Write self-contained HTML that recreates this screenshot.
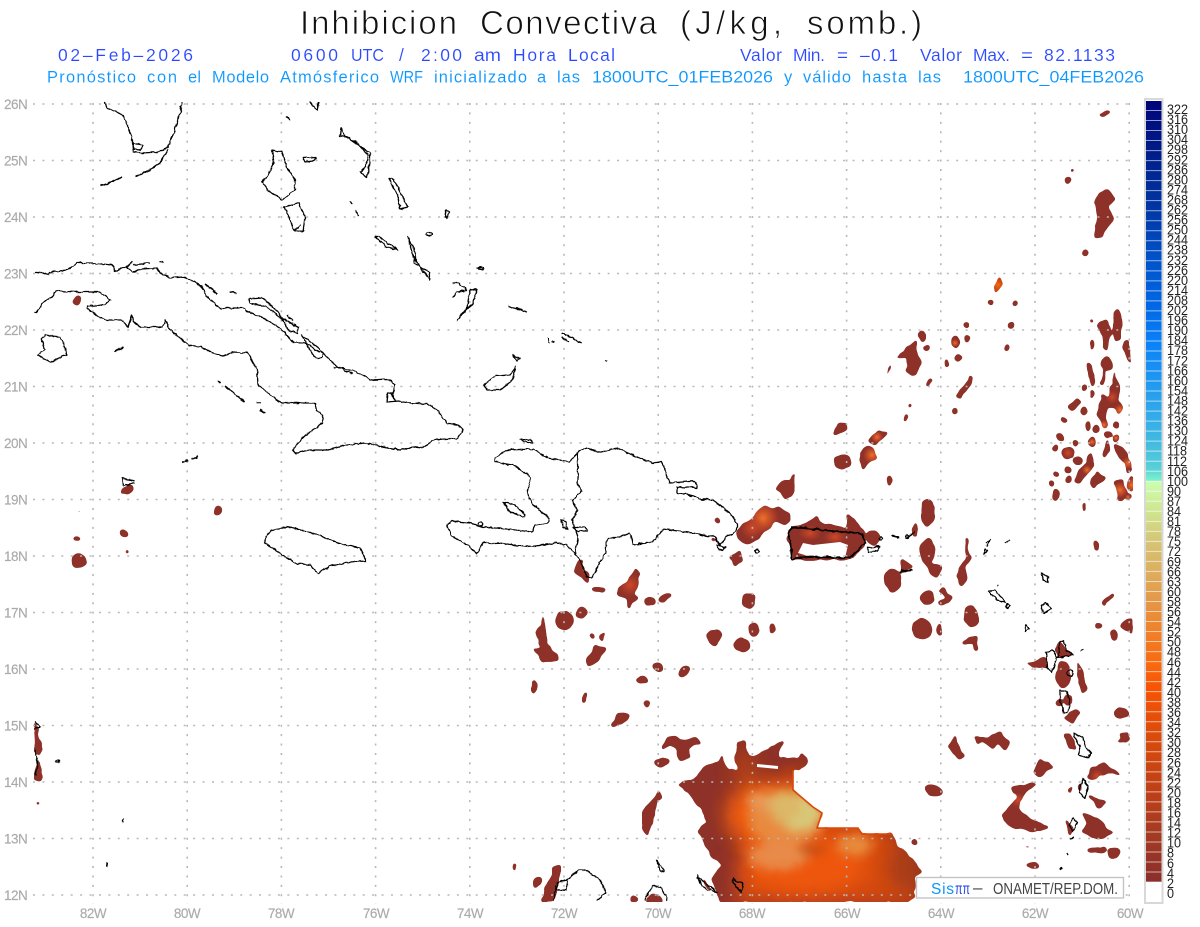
<!DOCTYPE html>
<html><head><meta charset="utf-8"><title>Inhibicion Convectiva</title>
<style>
html,body{margin:0;padding:0;background:#fff}
svg{display:block}
.t{font-family:"Liberation Sans",sans-serif}
.ti text{font-family:"Liberation Sans",sans-serif;font-size:33px;fill:#111;stroke:#fff;stroke-width:.75px}
.l2 text{font-family:"Liberation Sans",sans-serif;font-size:17.5px;fill:#2a48ff;stroke:#fff;stroke-width:.12px}
.l3 text{font-family:"Liberation Sans",sans-serif;font-size:16.5px;fill:#0a96ff;stroke:#fff;stroke-width:.1px}
.g text{font-family:"Liberation Sans",sans-serif;font-size:13.5px;fill:#aaa;stroke:#aaa;stroke-width:.15px;letter-spacing:-.5px}
.c text{font-family:"Liberation Sans",sans-serif;font-size:14px;fill:#222}
.coast{fill:none;stroke:#000;stroke-width:1.3;stroke-linejoin:round}
.r{fill:#8e3128;stroke:none}
</style></head><body>
<svg xmlns="http://www.w3.org/2000/svg" width="1200" height="927" viewBox="0 0 1200 927">
<defs>
<clipPath id="plot"><rect x="34" y="101" width="1099" height="801"/></clipPath>
<clipPath id="mainclip"><path d="M720 902L712 878L722 864L712 857L698 830L707 823L700 807L683 788L677 785L683 781L695 780L703 767L718 762L722 755L728 770L737 770L735 758L738 742L745 742L750 757L753 757L767 750L782 740L783 743L778 757L798 758L802 753L808 762L800 770L793 770L793 790L813 807L822 813L817 828L858 828L862 834L892 834L898 847L913 860L922 872L915 877L915 897L907 902Z"/></clipPath>
<filter id="b10" x="-30%" y="-30%" width="160%" height="160%"><feGaussianBlur stdDeviation="9"/></filter>
<filter id="b5" x="-30%" y="-30%" width="160%" height="160%"><feGaussianBlur stdDeviation="5"/></filter>
<filter id="goo" filterUnits="userSpaceOnUse" x="0" y="90" width="1200" height="830" color-interpolation-filters="sRGB">
<feTurbulence type="fractalNoise" baseFrequency=".11" numOctaves="2" seed="4" result="n"/>
<feDisplacementMap in="SourceGraphic" in2="n" scale="5" xChannelSelector="R" yChannelSelector="G" result="d"/>
<feGaussianBlur in="d" stdDeviation="1.2"/>
<feColorMatrix type="matrix" values="1 0 0 0 0 0 1 0 0 0 0 0 1 0 0 0 0 0 9 -3"/>
</filter>
<filter id="wig" filterUnits="userSpaceOnUse" x="0" y="90" width="1200" height="830" color-interpolation-filters="sRGB">
<feTurbulence type="fractalNoise" baseFrequency=".2" numOctaves="2" seed="9" result="n"/>
<feDisplacementMap in="SourceGraphic" in2="n" scale="3.2" xChannelSelector="R" yChannelSelector="G" result="d"/>
<feGaussianBlur in="d" stdDeviation=".3"/>
</filter>
<radialGradient id="hot"><stop offset="0" stop-color="#f07010"/><stop offset="1" stop-color="#f05a0a" stop-opacity="0"/></radialGradient>
<radialGradient id="mid"><stop offset="0" stop-color="#d0480f"/><stop offset="1" stop-color="#c0441a" stop-opacity="0"/></radialGradient>
<linearGradient id="bar" gradientUnits="userSpaceOnUse" x1="0" y1="101" x2="0" y2="882">
<stop offset="0" stop-color="#00047a"/><stop offset=".06" stop-color="#001b88"/><stop offset=".13" stop-color="#0033a0"/>
<stop offset=".2" stop-color="#0051c8"/><stop offset=".26" stop-color="#0066e4"/><stop offset=".31" stop-color="#0a82f8"/>
<stop offset=".36" stop-color="#2098f0"/><stop offset=".41" stop-color="#36aee8"/><stop offset=".44" stop-color="#44bce0"/>
<stop offset=".47" stop-color="#58d0d8"/><stop offset=".4865" stop-color="#7cf4cc"/><stop offset=".4866" stop-color="#ccffb0"/>
<stop offset=".53" stop-color="#d0e28c"/><stop offset=".56" stop-color="#d4c878"/><stop offset=".6" stop-color="#dcb060"/>
<stop offset=".64" stop-color="#e49848"/><stop offset=".67" stop-color="#ee8630"/><stop offset=".72" stop-color="#fa6a10"/>
<stop offset=".75" stop-color="#f85404"/><stop offset=".82" stop-color="#d84a0c"/><stop offset=".88" stop-color="#c04016"/>
<stop offset=".94" stop-color="#a43a22"/><stop offset="1" stop-color="#8a2e2c"/>
</linearGradient>
</defs>
<rect width="1200" height="927" fill="#fff"/>

<g class="ti">
<text x="300" y="34" textLength="157" lengthAdjust="spacing">Inhibicion</text>
<text x="480" y="34" textLength="177" lengthAdjust="spacing">Convectiva</text>
<text x="680" y="34" textLength="102" lengthAdjust="spacing">(J/kg,</text>
<text x="807" y="34" textLength="115" lengthAdjust="spacing">somb.)</text>
</g>
<g class="l2">
<text x="58" y="61" textLength="135" lengthAdjust="spacing">02–Feb–2026</text>
<text x="291" y="61" textLength="47" lengthAdjust="spacing">0600</text>
<text x="351" y="61" textLength="33" lengthAdjust="spacingAndGlyphs">UTC</text>
<text x="399" y="61">/</text>
<text x="421" y="61" textLength="41" lengthAdjust="spacing">2:00</text>
<text x="474" y="61" textLength="27" lengthAdjust="spacingAndGlyphs">am</text>
<text x="513" y="61" textLength="43" lengthAdjust="spacing">Hora</text>
<text x="568" y="61" textLength="47" lengthAdjust="spacing">Local</text>
<text x="740" y="61" textLength="42" lengthAdjust="spacing">Valor</text>
<text x="793" y="61" textLength="32" lengthAdjust="spacing">Min.</text>
<text x="837" y="61" textLength="11" lengthAdjust="spacingAndGlyphs">=</text>
<text x="860" y="61" textLength="38" lengthAdjust="spacing">–0.1</text>
<text x="920" y="61" textLength="42" lengthAdjust="spacing">Valor</text>
<text x="973" y="61" textLength="37" lengthAdjust="spacing">Max.</text>
<text x="1021" y="61" textLength="12" lengthAdjust="spacingAndGlyphs">=</text>
<text x="1044" y="61" textLength="71" lengthAdjust="spacing">82.1133</text>
</g>
<g class="l3">
<text x="47" y="82.5" textLength="89" lengthAdjust="spacing">Pronóstico</text>
<text x="147" y="82.5" textLength="30" lengthAdjust="spacing">con</text>
<text x="188" y="82.5" textLength="13" lengthAdjust="spacing">el</text>
<text x="212" y="82.5" textLength="57" lengthAdjust="spacing">Modelo</text>
<text x="280" y="82.5" textLength="99" lengthAdjust="spacing">Atmósferico</text>
<text x="390" y="82.5" textLength="33" lengthAdjust="spacingAndGlyphs">WRF</text>
<text x="434" y="82.5" textLength="93" lengthAdjust="spacing">inicializado</text>
<text x="537" y="82.5" textLength="10" lengthAdjust="spacing">a</text>
<text x="557" y="82.5" textLength="23" lengthAdjust="spacing">las</text>
<text x="592" y="82.5" textLength="181" lengthAdjust="spacingAndGlyphs">1800UTC_01FEB2026</text>
<text x="784" y="82.5" textLength="8" lengthAdjust="spacing">y</text>
<text x="803" y="82.5" textLength="48" lengthAdjust="spacing">válido</text>
<text x="862" y="82.5" textLength="45" lengthAdjust="spacing">hasta</text>
<text x="918" y="82.5" textLength="23" lengthAdjust="spacing">las</text>
<text x="963" y="82.5" textLength="181" lengthAdjust="spacingAndGlyphs">1800UTC_04FEB2026</text>
</g>

<line x1="34" y1="101.5" x2="1133" y2="101.5" stroke="#f2f2f2"/>

<g clip-path="url(#plot)">
<rect x="34" y="101" width="1099" height="801" fill="#fff"/>
<!-- main blob -->
<g filter="url(#goo)">
<g clip-path="url(#mainclip)">
<rect x="670" y="730" width="260" height="175" fill="#8e3128"/>
<g filter="url(#b10)">
<path d="M745 790L800 770L895 835L925 905L735 905Z" fill="#d44a0e"/>
<ellipse cx="805" cy="865" rx="62" ry="30" fill="#ee560a"/>
<ellipse cx="765" cy="815" rx="40" ry="34" fill="#ee5c10"/>
<ellipse cx="745" cy="770" rx="12" ry="20" fill="#b04018"/>
<ellipse cx="725" cy="885" rx="14" ry="20" fill="#8e3128"/>
<ellipse cx="905" cy="868" rx="18" ry="26" fill="#a83c14"/>
</g>
<g filter="url(#b5)">
<ellipse cx="786" cy="818" rx="38" ry="28" fill="#e88a40"/>
<ellipse cx="778" cy="856" rx="30" ry="14" fill="#e88a48"/>
<ellipse cx="855" cy="845" rx="18" ry="11" fill="#e88a3a"/>
<ellipse cx="762" cy="800" rx="16" ry="8" fill="#e89a58"/>
<ellipse cx="812" cy="850" rx="13" ry="4" fill="#b84a18"/>
<ellipse cx="800" cy="812" rx="22" ry="19" fill="#d8c878"/>
<ellipse cx="785" cy="806" rx="16" ry="16" fill="#dcb868"/>
</g>
</g>
</g>
<path d="M793 770L793 790L813 807L822 813L817 828L858 828L862 834L892 834" fill="none" stroke="#d8480a" stroke-width="1.6"/>
<path d="M757 764L778 766L778 769L757 767Z" fill="#fff"/>

<!-- blobs -->
<g class="r" filter="url(#goo)">
<ellipse cx="1105" cy="113" rx="5" ry="2" transform="rotate(-15 1105 113)"/><ellipse cx="1072" cy="170" rx="2" ry="2"/><ellipse cx="1068" cy="181" rx="2.5" ry="4"/>
<ellipse cx="1085" cy="253" rx="3" ry="3.5"/><circle cx="1080" cy="156" r="1"/>
<path d="M1108 189L1115 200L1108 207L1113 217L1106 230L1102 238L1095 237L1096 220L1098 213L1094 203L1098 193Z"/>
<path style="fill:#c8440f" d="M1000 277L1003 283L996 293L993 287Z"/>
<circle cx="991" cy="303" r="2.8"/><circle cx="1015" cy="303" r="2.8"/><circle cx="967" cy="325" r="3"/><circle cx="1011" cy="325" r="3.6"/>
<ellipse cx="955" cy="342" rx="4" ry="6"/><circle cx="967" cy="339" r="3"/><circle cx="1007" cy="347" r="2.8"/><circle cx="959" cy="357" r="3.2"/><circle cx="927" cy="348" r="2.6"/><ellipse cx="922" cy="336" rx="4" ry="5"/>
<path d="M915 339L918 358L922 363L915 375L905 372L908 367L905 358L895 356L903 353Z"/>
<path d="M890 362L891 370L885 375L889 368Z"/>
<ellipse cx="947" cy="363" rx="2" ry="4.5"/>
<path d="M926 385L932 379" stroke="#8e3128" stroke-width="3"/>
<path d="M971 377L966 386L958 398" stroke="#8e3128" stroke-width="5" fill="none"/>
<circle cx="910" cy="406" r="2.2"/><ellipse cx="906" cy="418" rx="1.8" ry="4"/><circle cx="955" cy="411" r="3"/><ellipse cx="890" cy="481" rx="1.5" ry="5"/>
<ellipse cx="928" cy="513" rx="7" ry="14"/>
<path d="M912 530L915 520L918 530L917 536L912 536Z"/>
<circle cx="1092" cy="321" r="1.8"/>
<path d="M1097 325L1105 318L1112 332L1108 342L1107 351L1102 348L1103 337Z"/>
<path d="M1117 308L1122 315L1120 340L1116 343L1113 333L1114 313Z"/>
<path d="M1122 345L1128 340L1132 370L1128 360Z"/>
<ellipse cx="1092" cy="345" rx="1.5" ry="7"/>
<path d="M1088 361L1093 367L1096 383L1092 386L1087 373Z"/>
<circle cx="1107" cy="364" r="6"/><path d="M1105 368L1104 385L1100 385L1103 372Z"/>
<path d="M1113 370L1120 388L1118 400L1123 407L1120 415L1113 407L1107 407L1107 415L1105 420L1107 427L1103 428L1097 413L1102 395L1108 398L1112 385Z"/>
<circle cx="1084" cy="388" r="3"/><ellipse cx="1092" cy="394" rx="2" ry="5"/>
<path d="M1070 409L1079 400" stroke="#8e3128" stroke-width="6" fill="none"/>
<circle cx="1084" cy="411" r="3.5"/><circle cx="1064" cy="420" r="3"/><ellipse cx="1088" cy="426" rx="2.5" ry="5"/><circle cx="1096" cy="429" r="3.5"/><circle cx="1116" cy="425" r="3"/><circle cx="1108" cy="434" r="3.5"/><circle cx="1060" cy="438" r="3.8"/><circle cx="1056" cy="448" r="3"/><circle cx="1076" cy="443" r="3"/><ellipse cx="1092" cy="442" rx="3.5" ry="5"/><circle cx="1116" cy="438" r="3.5"/>
<path d="M1108 438L1110 450L1104 458L1102 455Z"/>
<ellipse cx="1068" cy="453" rx="6" ry="6"/><ellipse cx="1078" cy="461" rx="5" ry="4"/>
<path d="M1097 450L1092 453L1093 467L1087 473L1080 483L1075 482L1080 470L1088 463L1087 455Z"/>
<circle cx="1068" cy="470" r="3.5"/><circle cx="1056" cy="474" r="3"/><circle cx="1068" cy="479" r="3"/><circle cx="1052" cy="484" r="3"/><ellipse cx="1056" cy="495" rx="4" ry="6"/>
<path d="M1097 472L1107 478L1100 483L1093 487L1090 483L1093 477Z"/>
<path d="M1115 443L1127 453L1130 460L1132 470L1127 473L1125 462L1115 452Z"/>
<path d="M1115 480L1123 480L1127 492L1122 502L1117 500L1117 487L1113 483Z"/>
<circle cx="1128" cy="497" r="3"/><ellipse cx="1131" cy="483" rx="3" ry="8"/><ellipse cx="1084" cy="507" rx="1.5" ry="5"/>
<path d="M765 504L772 509L778 507L790 513L790 520L783 524L775 522L768 530L747 545L737 538L737 530L753 517Z"/>
<path d="M795 473L795 490L787 501L775 488L780 482L790 480Z"/>
<path d="M787 537L792 527L807 523L817 515L820 523L847 528L847 515L853 518L865 533L865 545L852 558L837 560L792 560L790 543Z"/>
<ellipse cx="873" cy="538" rx="7" ry="7"/>
<ellipse cx="893" cy="580" rx="8" ry="12"/><path d="M902 558L913 567L900 573Z"/>
<circle cx="842" cy="462" r="8"/>
<path d="M867 445L873 448L878 458L868 463L863 472L860 453Z"/>
<path d="M878 430L887 434L875 446L868 440Z"/>
<path d="M832 435L838 424L848 423L847 430L838 435Z"/>
<ellipse cx="717" cy="520" rx="2.5" ry="2.5"/><circle cx="713" cy="539" r="2"/>
<path d="M730 557L740 550L743 562L735 567Z"/>
<path d="M577 560L582 560L583 570L590 575L588 583L575 572Z"/>
<ellipse cx="599" cy="589" rx="7" ry="3"/>
<path d="M635 567L640 573L635 593L638 598L628 610L627 598L618 595L618 588L627 583Z"/>
<ellipse cx="650" cy="602" rx="6" ry="5"/><ellipse cx="665" cy="597" rx="7" ry="3.5" transform="rotate(-35 665 597)"/>
<ellipse cx="565" cy="620" rx="8.5" ry="9"/><circle cx="581" cy="613" r="5.5"/>
<path d="M543 610L547 643L557 655L557 660L542 662L533 648L540 650L536 633L542 623Z"/>
<circle cx="748" cy="601" r="7"/><ellipse cx="714" cy="637" rx="7.5" ry="8.5"/><ellipse cx="742" cy="645" rx="8" ry="7"/><ellipse cx="754" cy="630" rx="5" ry="7"/><ellipse cx="772" cy="628" rx="3.5" ry="5"/>
<circle cx="592" cy="636" r="2"/>
<path d="M599 635L606 633L602 642Z"/>
<path d="M595 646L607 648L597 662L588 666L585 660L590 655Z"/>
<circle cx="658" cy="667" r="5"/><ellipse cx="684" cy="671" rx="7" ry="3.5" transform="rotate(-40 684 671)"/><ellipse cx="642" cy="680" rx="6" ry="4"/><ellipse cx="534" cy="687" rx="2.5" ry="7"/><ellipse cx="585" cy="697" rx="2.5" ry="6" transform="rotate(15 585 697)"/><circle cx="647" cy="704" r="3"/>
<rect x="566" y="714" width="1.2" height="5"/><rect x="566" y="597" width="1.2" height="6"/>
<path d="M618 713L630 715L628 720L613 728L612 725Z"/>
<path d="M668 737L675 736L682 741L697 736L702 743L688 748L690 758L680 760L675 748L670 745L663 750L663 745Z"/>
<ellipse cx="662" cy="762" rx="8" ry="4"/>
<path d="M660 790L663 797L657 802L653 820L648 836L642 828L643 810L655 797Z"/>
<ellipse cx="515" cy="867" rx="2" ry="4"/><ellipse cx="537" cy="882" rx="3" ry="6" transform="rotate(30 537 882)"/>
<path d="M553 867L561 865L559 880L553 902L542 902L545 888L552 877Z"/>
<ellipse cx="634" cy="899" rx="3.5" ry="4"/><ellipse cx="654" cy="900" rx="8" ry="6"/>
<path d="M702 878L709 888L717 892L708 890L703 884Z"/>
<ellipse cx="928" cy="551" rx="7" ry="13"/>
<path d="M925 563L943 565L938 578L930 575Z"/>
<path d="M966 538L968 538L968 554L973 558L966 565L966 580L962 587L957 577L960 567L966 557Z"/>
<circle cx="927" cy="598" r="7"/>
<path d="M937 592L943 587L953 597L950 603L938 606L937 602L947 598L942 593Z"/>
<ellipse cx="971" cy="616" rx="7" ry="11"/><ellipse cx="923" cy="629" rx="9.5" ry="10.5"/><ellipse cx="939" cy="629" rx="2.5" ry="6"/>
<path d="M961 645L968 637L977 637L978 650L975 652L973 643L967 643Z"/>
<path d="M958 659L961 657L962 660Z"/>
<ellipse cx="1096" cy="546" rx="2.5" ry="4.5"/>
<path d="M1103 605L1113 593" stroke="#8e3128" stroke-width="3.5" fill="none"/>
<path d="M1121 625L1132 617L1132 635Z"/>
<ellipse cx="1098" cy="626" rx="4" ry="2.5"/><ellipse cx="1114" cy="635" rx="3.5" ry="5"/>
<path d="M1053 650L1060 642L1073 655L1060 658Z"/>
<path d="M1025 663L1037 661L1046 657L1047 668L1035 667Z"/>
<ellipse cx="1063" cy="675" rx="7" ry="13"/>
<path d="M1077 660L1083 673L1087 690L1082 693L1078 677Z"/>
<ellipse cx="1060" cy="703" rx="3" ry="4"/><ellipse cx="1068" cy="700" rx="4" ry="6"/>
<path d="M1078 708L1080 713L1072 723L1063 718L1070 713L1073 710Z"/>
<ellipse cx="1121" cy="713" rx="7" ry="5.5"/>
<path d="M1063 733L1070 733L1077 750L1070 750Z"/>
<path d="M1119 732L1128 733L1127 742L1117 743L1122 738Z"/>
<path d="M955 735L958 743L965 757L958 759L948 747Z"/>
<path d="M973 737L988 737L1000 732L1010 743L1005 751L998 743L993 750L983 740L978 745Z"/>
<ellipse cx="934" cy="790" rx="9" ry="5.5" transform="rotate(18 934 790)"/>
<path d="M1040 758L1053 767L1038 777L1033 772Z"/>
<path d="M1103 763L1122 775L1107 773L1093 780L1087 777L1092 767Z"/>
<path d="M1010 787L1037 783L1023 795L1018 808L1037 823L1050 828L1033 831L1010 827L1002 815L1017 798Z"/>
<path d="M1088 795L1107 803L1098 809Z"/>
<path d="M1082 813L1097 818L1105 827L1113 833L1097 840L1083 833L1087 823Z"/>
<path d="M1065 818L1075 830L1070 836Z"/>
<path d="M1073 785L1070 795L1067 790Z"/>
<path d="M1078 785L1082 782L1081 792Z"/>
<ellipse cx="1097" cy="850" rx="9" ry="3"/><ellipse cx="1114" cy="853" rx="6" ry="5"/><ellipse cx="1033" cy="865" rx="7" ry="2.5"/><circle cx="915" cy="842" r="3"/><rect x="1024" y="846" width="6" height="1.5"/>
<path d="M1122 735L1127 733L1130 740L1126 744Z"/>
<ellipse cx="127" cy="490" rx="6.5" ry="2.8" transform="rotate(-35 127 490)"/><circle cx="79" cy="512" r="1.5"/><ellipse cx="218" cy="510" rx="4" ry="4.5"/><ellipse cx="124" cy="534" rx="5" ry="3"/><ellipse cx="77" cy="539" rx="3" ry="2"/><circle cx="127" cy="552" r="1.8"/><circle cx="79" cy="561" r="7"/><circle cx="38" cy="804" r="1.8"/>
<path d="M34 722L38 727L38 735L41 745L42 750L38 757L35 750Z"/>
<path d="M38 760L42 770L41 780L34 780L35 770Z"/>
<ellipse cx="77" cy="300" rx="3.5" ry="4.5" transform="rotate(15 77 300)"/><rect x="37" y="316" width="5" height="1.5"/>
</g>
<path d="M803 543L813 545L840 542L848 545L845 558L835 558L827 555L822 557L808 556L798 553Z" fill="#fff"/>
<!-- hot spots: lighten keeps white background untouched -->
<g style="mix-blend-mode:lighten">
<circle cx="763" cy="518" r="16" fill="url(#hot)"/>
<ellipse cx="752" cy="528" rx="12" ry="12" fill="url(#mid)"/>
<ellipse cx="810" cy="533" rx="12" ry="8" fill="url(#mid)"/><ellipse cx="835" cy="537" rx="12" ry="8" fill="url(#mid)"/>
<circle cx="872" cy="455" r="9" fill="url(#hot)"/><circle cx="877" cy="437" r="6" fill="url(#hot)"/>
<circle cx="630" cy="585" r="12" fill="url(#mid)"/>
<circle cx="955" cy="343" r="4" fill="url(#hot)"/><circle cx="1112" cy="397" r="7" fill="url(#mid)"/><circle cx="1120" cy="410" r="6" fill="url(#hot)"/><circle cx="1104" cy="425" r="5" fill="url(#hot)"/>
<circle cx="1092" cy="442" r="4" fill="url(#hot)"/><circle cx="1096" cy="451" r="4" fill="url(#hot)"/><circle cx="1116" cy="438" r="3.5" fill="url(#hot)"/><circle cx="1068" cy="453" r="6" fill="url(#mid)"/><circle cx="1087" cy="470" r="5" fill="url(#hot)"/><circle cx="1128" cy="463" r="6" fill="url(#hot)"/><circle cx="1120" cy="490" r="8" fill="url(#hot)"/><circle cx="1132" cy="485" r="8" fill="url(#hot)"/><circle cx="1128" cy="497" r="3" fill="url(#hot)"/>
<circle cx="998" cy="285" r="6" fill="url(#hot)"/><circle cx="1097" cy="776" r="7" fill="url(#mid)"/><circle cx="1018" cy="800" r="8" fill="url(#mid)"/>
</g>
</g>

<!-- grid -->
<g stroke="#b8b8b8" stroke-width="1.6" stroke-dasharray="2 7.42">
<line x1="33" y1="104" x2="1134" y2="104"/><line x1="33" y1="160.5" x2="1134" y2="160.5"/><line x1="33" y1="217" x2="1134" y2="217"/><line x1="33" y1="273.5" x2="1134" y2="273.5"/><line x1="33" y1="330" x2="1134" y2="330"/><line x1="33" y1="386.5" x2="1134" y2="386.5"/><line x1="33" y1="443" x2="1134" y2="443"/><line x1="33" y1="499.5" x2="1134" y2="499.5"/><line x1="33" y1="556" x2="1134" y2="556"/><line x1="33" y1="612.5" x2="1134" y2="612.5"/><line x1="33" y1="669" x2="1134" y2="669"/><line x1="33" y1="725.5" x2="1134" y2="725.5"/><line x1="33" y1="782" x2="1134" y2="782"/><line x1="33" y1="838.5" x2="1134" y2="838.5"/><line x1="33" y1="895" x2="1134" y2="895"/>
<line x1="93" y1="103" x2="93" y2="904"/><line x1="187.2" y1="103" x2="187.2" y2="904"/><line x1="281.4" y1="103" x2="281.4" y2="904"/><line x1="375.6" y1="103" x2="375.6" y2="904"/><line x1="469.8" y1="103" x2="469.8" y2="904"/><line x1="564" y1="103" x2="564" y2="904"/><line x1="658.2" y1="103" x2="658.2" y2="904"/><line x1="752.4" y1="103" x2="752.4" y2="904"/><line x1="846.6" y1="103" x2="846.6" y2="904"/><line x1="940.8" y1="103" x2="940.8" y2="904"/><line x1="1035" y1="103" x2="1035" y2="904"/><line x1="1129.2" y1="103" x2="1129.2" y2="904"/>
</g>

<!-- coasts -->
<g clip-path="url(#plot)"><g class="coast" filter="url(#wig)">
<path d="M35 273L43 273L48 275L50 272L67 270L78 263L92 263L112 265L115 271L125 267L132 262L127 267L133 272L142 269L157 268L160 273L170 278L183 277L197 283L203 288L207 297L220 308L233 308L245 308L248 312L263 318L280 328L288 337L293 342L307 343L315 350L323 353L333 363L338 367L353 371L363 375L370 380L388 379L395 385L393 393L388 393L387 402L398 401L410 403L427 404L437 410L447 423L458 425L463 430L458 438L433 440L422 448L413 447L400 450L380 446L365 443L347 445L328 450L310 450L295 453L293 450L303 437L322 423L323 415L317 410L315 403L297 403L282 403L273 397L258 385L257 370L248 353L233 352L223 356L213 353L200 347L190 346L170 330L165 320L163 327L140 327L133 322L132 315L128 327L122 320L107 320L98 317L87 308L87 306L105 305L110 300L100 292L77 292L57 291L50 298L42 303L37 312L34 312"/>
<path d="M45 335L60 337L65 347L66 355L50 362L37 355L45 350L42 340Z"/>
<path d="M264 542L270 531L287 527L310 532L345 545L360 548L366 561L350 562L330 566L318 573L310 565L295 563L280 553Z"/>
<path d="M495 458L507 450L533 449L548 458L570 462L577 453L585 448L602 452L617 448L635 456L652 463L662 462L670 483L695 481L697 488L677 487L677 493L687 494L700 499L713 500L730 513L737 523L737 530L727 537L720 545L715 537L693 533L663 529L653 542L633 545L630 533L617 538L608 538L605 553L592 577L587 577L580 560L567 545L557 543L528 547L500 543L483 543L477 554L470 547L452 536L447 525L452 521L470 523L483 527L507 529L532 532L535 525L548 523L549 518L533 505L527 493L531 477L513 465L495 462Z"/>
<path d="M577 453L578 473L577 483L582 490L572 501L578 510L572 520L578 537L575 555"/>
<path d="M503 502L515 505L525 515L524 517L510 512Z"/>
<path d="M561 520L566 522L568 530L563 527Z"/><path d="M573 527L585 527L587 531L577 531Z"/>
<path d="M717 545L725 547L723 550L718 549Z"/><circle cx="757" cy="551" r="1.8"/><path d="M520 439L531 440L533 443L524 442Z"/>
<path d="M482 523A2 2 0 1 1 481 522Z"/>
<path d="M788 533L792 527L863 534L865 543L850 558L810 557L792 559L790 540Z" stroke-width="1.8"/>
<path d="M868 548L880 546L877 551L868 552Z"/><path d="M892 536L899 538" stroke-width="2"/><path d="M907 538L915 531"/><circle cx="907" cy="537" r="1.5"/><circle cx="881" cy="539" r="1.5"/>
<path d="M900 573L912 570L901 571" stroke-width="1.4"/>
<path d="M105 102L107 108L123 115L132 137L134 152L142 153L159 152L168 147L174 132L180 113L182 102"/>
<path d="M132 143L143 145L140 150L133 149Z"/>
<path d="M101 186L112 182L122 177M136 177L150 170L160 163L168 150" stroke-width="1.6"/>
<path d="M272 150L282 152L287 167L295 180L295 190L282 200L268 190L262 182L268 175L274 163Z"/>
<path d="M284 207L299 203L305 217L303 232L293 230L289 217Z"/><path d="M293 231L301 225"/>
<path d="M341 128L340 136L347 137L370 153L370 163L367 178L360 172L366 167L368 155L356 142L344 135Z"/>
<path d="M303 158L316 157L314 161L305 162Z"/>
<path d="M389 178L394 180L408 207L400 209L398 197Z"/>
<path d="M375 237L379 237L398 250L387 247Z"/>
<path d="M408 237L416 253L414 263L429 272L430 280L421 268L413 256Z"/>
<path d="M446 210L449 211L447 218L445 217Z"/><ellipse cx="429" cy="234" rx="3.5" ry="1.5"/><ellipse cx="481" cy="268" rx="3" ry="1.3"/>
<path d="M310 102L317 110L319 102"/><path d="M286 116L290 120"/><path d="M350 201L352 204"/><path d="M356 210L358 216" stroke-width="1.4"/>
<path d="M453 283L458 283L467 290L457 292L453 298"/><path d="M470 290L477 289L473 303L457 320L467 308Z"/><path d="M476 268L484 269"/>
<path d="M508 306L517 309L527 312M516 307L522 310"/>
<path d="M562 333L569 336L575 340L582 343M562 337L568 342"/>
<path d="M484 385L495 376L510 375L516 367L512 380L500 390L487 390Z"/><path d="M513 355L520 358L517 361Z"/><path d="M552 341L555 342"/><path d="M605 360L607 361"/><path d="M548 338L549 343"/>
<path d="M205 284L218 294" stroke-width="1.6"/><path d="M230 292L237 293" stroke-width="1.6"/><path d="M133 265L150 263M160 262L163 263"/>
<path d="M249 299L263 298L278 312L282 318L298 327L298 333L288 330L283 320L267 307L250 303Z"/><path d="M287 315L293 321"/><path d="M302 335L323 352L322 358L315 358L308 347Z"/>
<path d="M333 368L340 367L345 371L353 374"/><path d="M390 393L395 400L392 393"/>
<path d="M115 352L123 347" stroke-width="1.8"/>
<path d="M217 381L220 383M225 386L235 394L245 402" stroke-width="1.5"/><path d="M256 403L260 403M260 410L265 413" stroke-width="1.4"/>
<path d="M182 462L188 460M192 459L198 457" stroke-width="1.5"/>
<path d="M121 478L135 481M122 478L123 486L135 483"/><path d="M57 760L59 760L59 762L55 762Z"/><path d="M123 819L123 822"/><path d="M107 862L106 867" stroke-width="1.7"/>
<path d="M35 722L40 727L34 729"/><path d="M35 750L38 765L35 775"/>
<path d="M985 543L991 540L986 546"/><path d="M1005 543L1010 540"/>
<path d="M985 549L988 551L984 554Z"/><path d="M989 592L995 590L1005 602L1000 602Z"/><path d="M1007 603L1010 606L1008 608L1006 606Z"/>
<path d="M997 585L998 586"/><path d="M1041 573L1048 577L1048 582L1043 580Z"/><path d="M1041 606L1046 603L1051 609L1044 613Z"/><path d="M1026 624L1029 629L1026 631L1025 627Z"/>
<path d="M1046 652L1053 650L1057 658L1052 672L1047 668Z"/><path d="M1060 642L1064 641L1066 650L1073 655L1058 658Z"/>
<circle cx="1070" cy="673" r="3"/><path d="M1080 651L1083 650"/>
<path d="M1060 690L1067 692L1070 700L1068 713L1064 713L1060 700Z"/>
<path d="M1073 733L1083 738L1085 745L1091 753L1088 758L1078 755L1080 747Z"/>
<path d="M1083 778L1088 787L1085 798L1079 792L1080 785Z"/>
<path d="M1073 818L1077 823L1073 832L1069 825Z"/>
<path d="M1070 839L1073 837" stroke-width="1.4"/><path d="M1067 853L1068 855"/><path d="M1061 867L1062 868L1060 869Z"/>
<path d="M656 860L664 870L664 872L660 870Z"/>
<path d="M645 900L653 885L662 888L667 900"/>
<path d="M697 875L701 880L717 892L708 890L701 885Z"/>
<path d="M733 878L737 882L743 883L741 893L738 888L733 882Z"/>
<path d="M553 901L558 883L565 880L570 878L578 870L585 870L600 880L606 892L597 901"/><path d="M555 885L556 890L566 890L568 880"/>
</g></g>

<!-- axis labels -->
<g class="g">
<text x="4" y="109">26N</text><text x="4" y="165.5">25N</text><text x="4" y="222">24N</text><text x="4" y="278.5">23N</text><text x="4" y="335">22N</text><text x="4" y="391.5">21N</text><text x="4" y="448">20N</text><text x="4" y="504.5">19N</text><text x="4" y="561">18N</text><text x="4" y="617.5">17N</text><text x="4" y="674">16N</text><text x="4" y="730.5">15N</text><text x="4" y="787">14N</text><text x="4" y="843.5">13N</text><text x="4" y="900">12N</text>
<g text-anchor="middle">
<text x="93" y="918">82W</text><text x="187" y="918">80W</text><text x="281" y="918">78W</text><text x="376" y="918">76W</text><text x="470" y="918">74W</text><text x="564" y="918">72W</text><text x="658" y="918">70W</text><text x="752" y="918">68W</text><text x="847" y="918">66W</text><text x="941" y="918">64W</text><text x="1035" y="918">62W</text><text x="1130" y="918">60W</text>
</g></g>

<!-- colorbar -->
<rect x="1145" y="99" width="17.5" height="804" fill="#fff" stroke="#d8d8d8" stroke-width="2"/>
<rect x="1146" y="101" width="15.5" height="781" fill="url(#bar)"/>
<line x1="1153.75" y1="110" x2="1153.75" y2="882" stroke="#fff" stroke-opacity=".6" stroke-width="15.5" stroke-dasharray="1 9.02"/>
<g class="c" transform="translate(1167 0) scale(.9 1)">
<text y="114">322</text><text y="124.1">316</text><text y="134.1">310</text><text y="144.2">304</text><text y="154.2">298</text><text y="164.3">292</text><text y="174.3">286</text><text y="184.4">280</text><text y="194.4">274</text><text y="204.5">268</text><text y="214.5">262</text><text y="224.6">256</text><text y="234.6">250</text><text y="244.7">244</text><text y="254.7">238</text><text y="264.8">232</text><text y="274.8">226</text><text y="284.9">220</text><text y="294.9">214</text><text y="305">208</text><text y="315">202</text><text y="325.1">196</text><text y="335.1">190</text><text y="345.2">184</text><text y="355.2">178</text><text y="365.3">172</text><text y="375.3">166</text><text y="385.4">160</text><text y="395.4">154</text><text y="405.5">148</text><text y="415.5">142</text><text y="425.6">136</text><text y="435.6">130</text><text y="445.7">124</text><text y="455.7">118</text><text y="465.8">112</text><text y="475.8">106</text><text y="485.9">100</text><text y="495.9">90</text><text y="506">87</text><text y="516">84</text><text y="526.1">81</text><text y="536.1">78</text><text y="546.2">75</text><text y="556.2">72</text><text y="566.3">69</text><text y="576.3">66</text><text y="586.4">63</text><text y="596.4">60</text><text y="606.5">58</text><text y="616.5">56</text><text y="626.6">54</text><text y="636.6">52</text><text y="646.7">50</text><text y="656.7">48</text><text y="666.8">46</text><text y="676.8">44</text><text y="686.9">42</text><text y="696.9">40</text><text y="707">38</text><text y="717">36</text><text y="727.1">34</text><text y="737.1">32</text><text y="747.2">30</text><text y="757.2">28</text><text y="767.3">26</text><text y="777.3">24</text><text y="787.4">22</text><text y="797.4">20</text><text y="807.5">18</text><text y="817.5">16</text><text y="827.6">14</text><text y="837.6">12</text><text y="847.7">10</text><text y="857.7">8</text><text y="867.8">6</text><text y="877.8">4</text><text y="887.9">2</text><text y="897.9">0</text>
</g>

<!-- logo box -->
<rect x="916.5" y="877.5" width="207" height="20.5" fill="#fff" stroke="#c4c4c4" stroke-width="1.4"/>
<text class="t" x="931" y="894" font-size="15.5" fill="#0a96ff" textLength="23" lengthAdjust="spacing">Sis</text>
<text class="t" x="955" y="894" font-size="16" fill="#2040e0" textLength="15" lengthAdjust="spacingAndGlyphs">ππ</text>
<text class="t" x="973" y="893" font-size="17" fill="#444">–</text>
<text class="t" x="993" y="894" font-size="15.5" fill="#444" textLength="125" lengthAdjust="spacingAndGlyphs">ONAMET/REP.DOM.</text>
</svg>
</body></html>
